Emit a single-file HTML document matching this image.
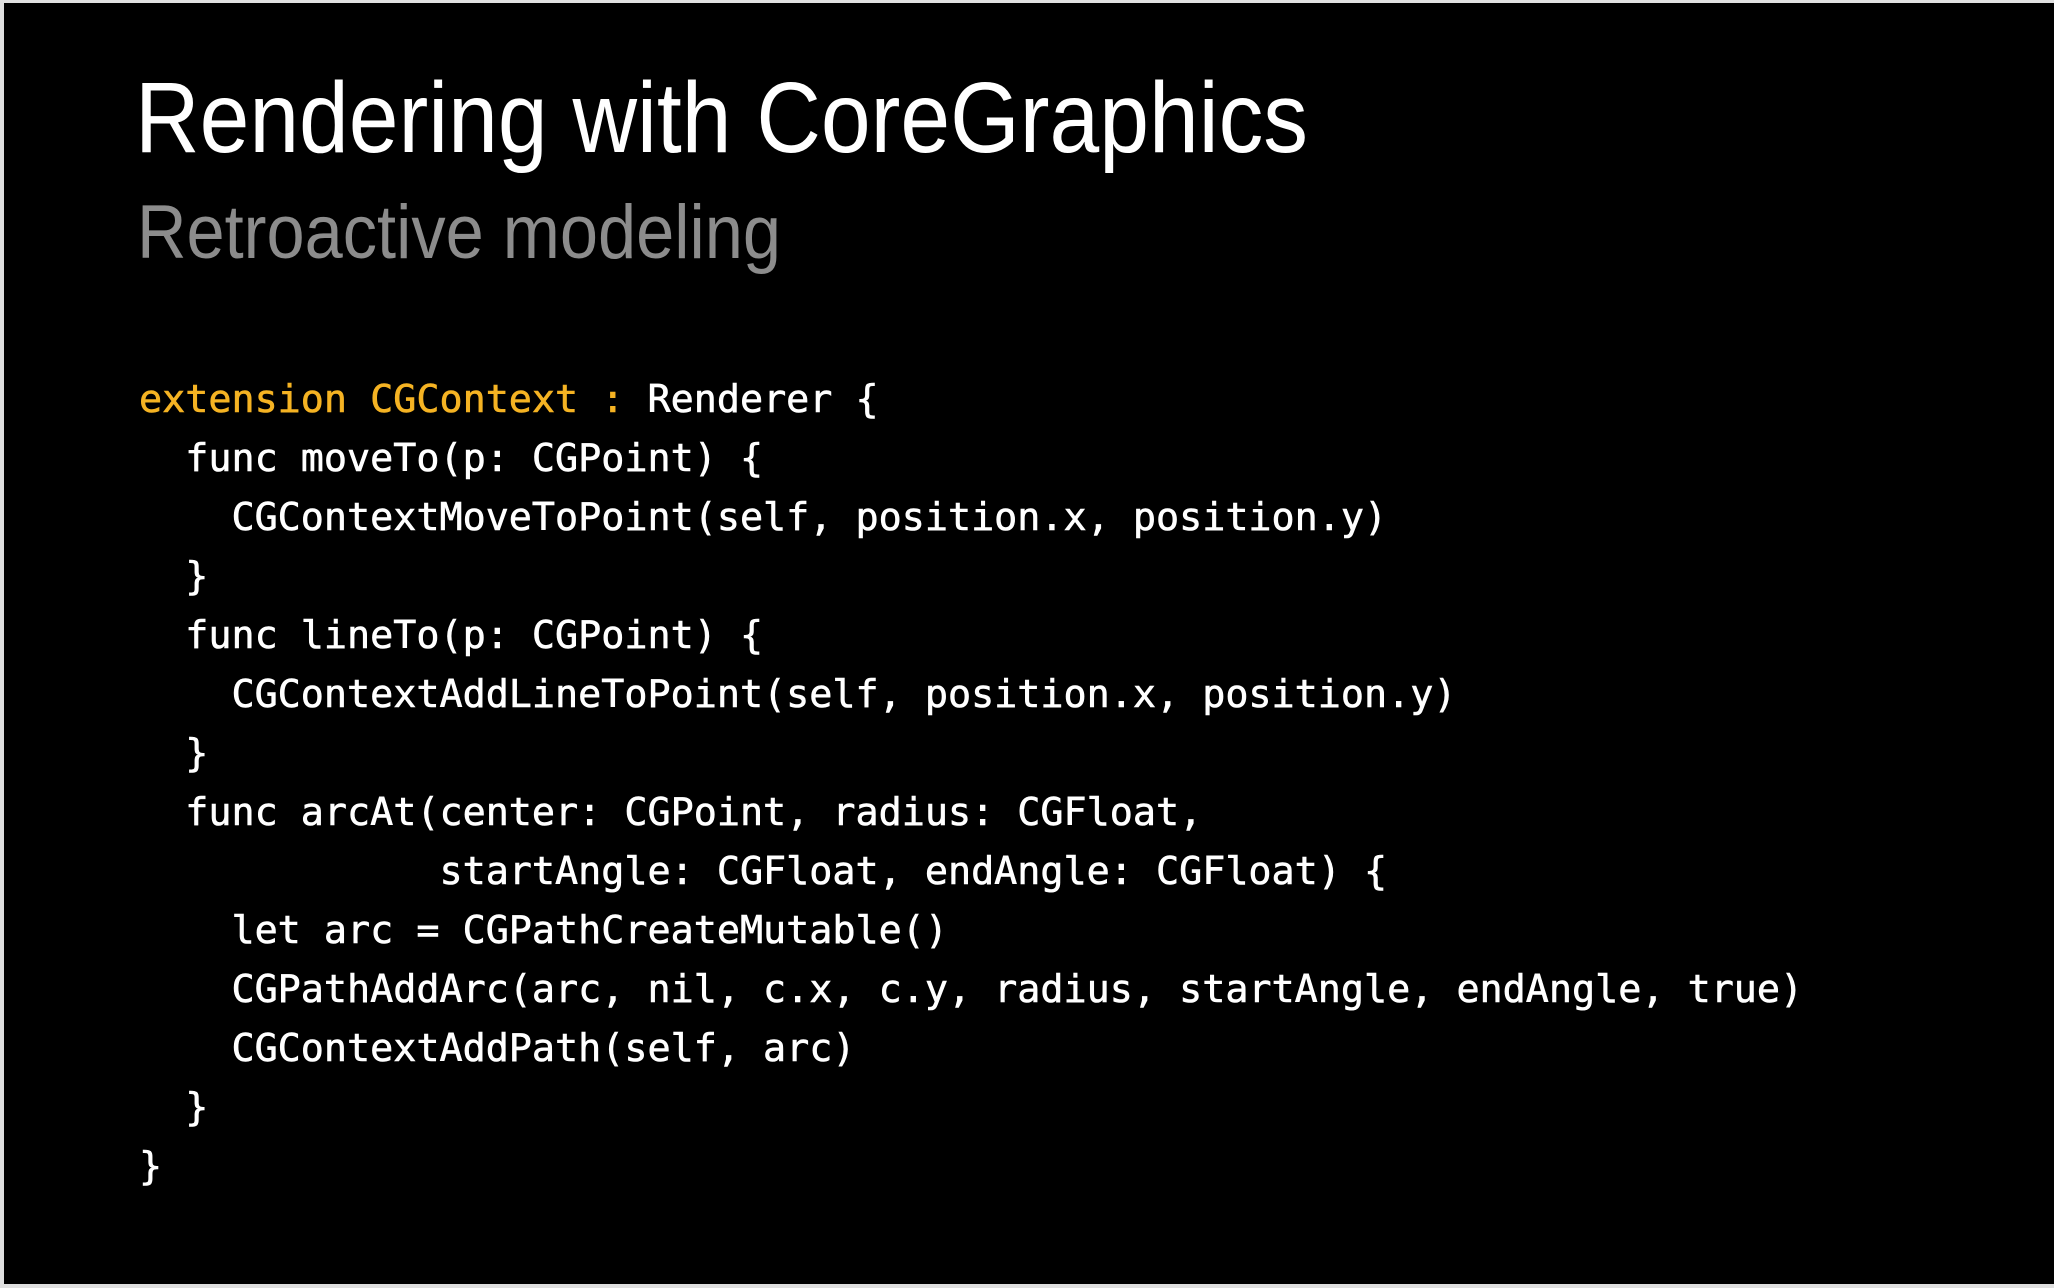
<!DOCTYPE html>
<html><head><meta charset="utf-8"><style>
html,body{margin:0;padding:0;background:#e0e0e0;}
body{width:2054px;height:1288px;position:relative;overflow:hidden;}
#slide{position:absolute;left:4px;top:3px;width:2050px;height:1281px;background:#000;}
svg{position:absolute;left:0;top:0;}
pre{position:absolute;left:139px;top:370px;margin:0;font-family:"DejaVu Sans Mono","Liberation Mono",monospace;font-size:38.4px;line-height:59px;color:#fff;-webkit-text-stroke:0.6px currentColor;}
.o{color:#f5b323;}
</style></head><body>
<div id="slide"></div>
<svg width="2054" height="1288">
<text x="135" y="152" font-family="Liberation Sans, sans-serif" font-size="100" fill="#fff" textLength="1173" lengthAdjust="spacingAndGlyphs">Rendering with CoreGraphics</text>
<text x="137" y="258" font-family="Liberation Sans, sans-serif" font-size="76" fill="#8c8c8c" textLength="644" lengthAdjust="spacingAndGlyphs">Retroactive modeling</text>
</svg>
<pre><span class="o">extension CGContext :</span> Renderer {
  func moveTo(p: CGPoint) {
    CGContextMoveToPoint(self, position.x, position.y)
  }
  func lineTo(p: CGPoint) {
    CGContextAddLineToPoint(self, position.x, position.y)
  }
  func arcAt(center: CGPoint, radius: CGFloat,
             startAngle: CGFloat, endAngle: CGFloat) {
    let arc = CGPathCreateMutable()
    CGPathAddArc(arc, nil, c.x, c.y, radius, startAngle, endAngle, true)
    CGContextAddPath(self, arc)
  }
}</pre>
</body></html>
